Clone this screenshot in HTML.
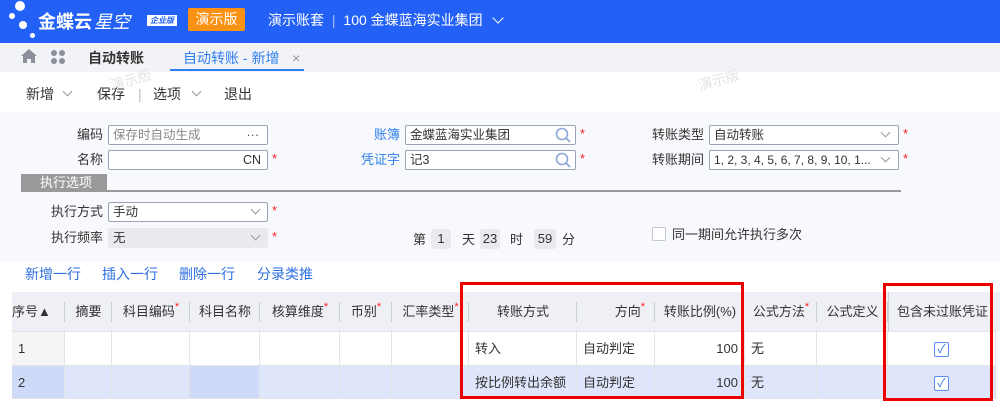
<!DOCTYPE html>
<html><head><meta charset="utf-8"><style>
*{margin:0;padding:0;box-sizing:border-box}
body{width:1000px;height:408px;overflow:hidden;font-family:"Liberation Sans","Noto Sans CJK SC",sans-serif;font-size:13px;line-height:20px;color:#333;background:#fff;position:relative}
.a{position:absolute;white-space:nowrap}
.hdr{left:0;top:0;width:1000px;height:43px;background:#2360f5}
.tabs{left:0;top:43px;width:1000px;height:29px;background:#f1f3f6}
.form{left:0;top:112px;width:1000px;height:150px;background:#f8f9fc}
.lbl{text-align:right;font-size:13px;color:#333}
.inp{background:#fff;border:1px solid #9aa3b5;border-radius:2px;height:20px;font-size:12.5px;line-height:18px;padding-left:4px;color:#333}
.star{color:#f22;font-size:13px}
.st{color:#f22;font-size:11px;position:relative;top:-6px;line-height:0}
.box{background:#e8eaee;border-radius:3px;height:20px;text-align:center;line-height:20px}
.col{position:absolute;top:292px;height:107px}
.hd{height:39px;background:#eef0f5;line-height:39px;font-size:13px;text-align:center;position:relative}
.r1{height:34px;background:#fff;border-top:1px solid #e2e4e8;border-right:1px solid #e2e4e8;line-height:33px;padding:0 6px}
.r2{height:34px;background:#dfe6fb;border-top:1px solid #e2e4e8;border-right:1px solid #e2e4e8;line-height:33px;padding:0 6px;border-bottom:1px solid #e2e4e8}
.sep{position:absolute;right:0;top:10px;width:1px;height:20px;background:#c8ccd4}
.chk{display:inline-block;width:15px;height:15px;border:1px solid #5b8ef0;border-radius:2px;background:#fff;color:#3a7af0;font-size:12px;line-height:13px;text-align:center;vertical-align:middle}
.chev{display:inline-block;width:7px;height:7px;border-right:1px solid #999;border-bottom:1px solid #999;transform:rotate(45deg)}
</style></head><body>
<div class="a hdr"></div>
<div class="a" style="left:15px;top:1px;width:10px;height:10px;border-radius:50%;background:#fff"></div>
<div class="a" style="left:9px;top:13px;width:6px;height:6px;border-radius:50%;background:#fff"></div>
<div class="a" style="left:19px;top:21px;width:8px;height:8px;border-radius:50%;background:#fff"></div>
<div class="a" style="left:30px;top:33px;width:5px;height:5px;border-radius:50%;background:#fff"></div>
<div class="a" style="left:38px;top:10px;color:#fff;font-size:18px;line-height:24px;font-weight:bold">金蝶云<span style="font-weight:normal;font-style:italic;margin-left:2px">星空</span></div>
<div class="a" style="left:147px;top:15px;width:30px;height:11px;background:#fff;color:#2360f5;font-size:8px;line-height:11px;text-align:center;font-style:italic;font-weight:bold">企业版</div>
<div class="a" style="left:188px;top:8px;width:57px;height:23px;background:#fb9214;border-radius:2px;color:#fff;font-size:14px;line-height:23px;text-align:center">演示版</div>
<div class="a" style="left:268px;top:10px;color:#fff;font-size:14px">演示账套 <span style="opacity:.6;margin:0 4px">|</span> 100 金蝶蓝海实业集团</div>
<div class="a" style="left:494px;top:14px;width:8px;height:8px;border-right:1.5px solid #fff;border-bottom:1.5px solid #fff;transform:rotate(45deg)"></div>

<div class="a tabs"></div>
<svg class="a" style="left:21px;top:49px" width="16" height="14" viewBox="0 0 16 14"><path d="M8 0L0 7h2v7h4v-4h4v4h4V7h2z" fill="#8a8f99"/></svg>
<svg class="a" style="left:50px;top:49px" width="16" height="16" viewBox="0 0 16 16" fill="#8a8f99"><circle cx="4" cy="4" r="3"/><circle cx="12" cy="4" r="3"/><circle cx="4" cy="12" r="3"/><circle cx="12" cy="12" r="3"/></svg>
<div class="a" style="left:88px;top:48px;font-size:14px;font-weight:bold;color:#333">自动转账</div>
<div class="a" style="left:183px;top:48px;font-size:14px;color:#2f7ff0">自动转账 - 新增</div>
<div class="a" style="left:292px;top:48px;font-size:14px;color:#999">×</div>
<div class="a" style="left:170px;top:69px;width:134px;height:2px;background:#2f7ff0"></div>

<div class="a" style="left:26px;top:84px;font-size:14px;color:#333">新增</div><div class="a chev" style="left:64px;top:88px"></div>
<div class="a" style="left:97px;top:84px;font-size:14px">保存</div>
<div class="a" style="left:138px;top:84px;font-size:14px;color:#bbb">|</div>
<div class="a" style="left:153px;top:84px;font-size:14px">选项</div><div class="a chev" style="left:193px;top:88px"></div>
<div class="a" style="left:224px;top:84px;font-size:14px">退出</div>
<div class="a" style="left:110px;top:70px;color:#e4e4e4;font-size:14px;transform:rotate(-15deg)">演示版</div>
<div class="a" style="left:698px;top:70px;color:#e4e4e4;font-size:14px;transform:rotate(-15deg)">演示版</div>

<div class="a form"></div>
<div class="a lbl" style="left:40px;top:125px;width:63px">编码</div>
<div class="a inp" style="left:108px;top:125px;width:160px;color:#888">保存时自动生成<span style="position:absolute;right:8px;color:#555">···</span></div>
<div class="a lbl" style="left:40px;top:150px;width:63px">名称</div>
<div class="a inp" style="left:108px;top:150px;width:160px"><span style="position:absolute;right:6px">CN</span></div>
<div class="a star" style="left:272px;top:149px">*</div>
<div class="a lbl" style="left:340px;top:125px;width:60px;color:#2f7ff0">账簿</div>
<div class="a inp" style="left:405px;top:125px;width:171px">金蝶蓝海实业集团</div>
<div class="a lbl" style="left:340px;top:150px;width:60px;color:#2f7ff0">凭证字</div>
<div class="a inp" style="left:405px;top:150px;width:171px">记3</div>
<svg class="a" style="left:555px;top:127px" width="16" height="16" viewBox="0 0 16 16"><circle cx="7" cy="7" r="5.5" fill="none" stroke="#8aa7d6" stroke-width="1.6"/><path d="M11 11l4 4" stroke="#8aa7d6" stroke-width="1.8"/></svg>
<svg class="a" style="left:555px;top:152px" width="16" height="16" viewBox="0 0 16 16"><circle cx="7" cy="7" r="5.5" fill="none" stroke="#8aa7d6" stroke-width="1.6"/><path d="M11 11l4 4" stroke="#8aa7d6" stroke-width="1.8"/></svg>
<div class="a star" style="left:580px;top:124px">*</div>
<div class="a star" style="left:580px;top:149px">*</div>
<div class="a lbl" style="left:640px;top:125px;width:64px">转账类型</div>
<div class="a inp" style="left:709px;top:125px;width:190px">自动转账</div><div class="a chev" style="left:882px;top:129px"></div>
<div class="a lbl" style="left:640px;top:150px;width:64px">转账期间</div>
<div class="a inp" style="left:709px;top:150px;width:190px;font-size:12px">1, 2, 3, 4, 5, 6, 7, 8, 9, 10, 1...</div><div class="a chev" style="left:882px;top:154px"></div>
<div class="a star" style="left:903px;top:124px">*</div>
<div class="a star" style="left:903px;top:149px">*</div>

<div class="a" style="left:21px;top:174px;width:86px;height:17px;background:#9a9a9a;color:#fff;font-size:13px;line-height:17px;padding-left:19px">执行选项</div>
<div class="a" style="left:21px;top:190px;width:880px;height:2px;background:#999"></div>

<div class="a lbl" style="left:40px;top:202px;width:63px">执行方式</div>
<div class="a inp" style="left:108px;top:202px;width:160px">手动</div><div class="a chev" style="left:252px;top:206px"></div>
<div class="a star" style="left:272px;top:201px">*</div>
<div class="a lbl" style="left:40px;top:228px;width:63px">执行频率</div>
<div class="a inp" style="left:108px;top:228px;width:160px;background:#e8eaee;border-color:#e8eaee">无</div><div class="a chev" style="left:252px;top:232px"></div>
<div class="a star" style="left:272px;top:227px">*</div>
<div class="a" style="left:413px;top:230px">第</div>
<div class="a box" style="left:431px;top:229px;width:20px">1</div>
<div class="a" style="left:462px;top:230px">天</div>
<div class="a box" style="left:480px;top:229px;width:20px">23</div>
<div class="a" style="left:510px;top:230px">时</div>
<div class="a box" style="left:534px;top:229px;width:22px">59</div>
<div class="a" style="left:562px;top:230px">分</div>
<div class="a" style="left:652px;top:227px;width:14px;height:14px;border:1px solid #c4c8d0;border-radius:2px;background:#fff"></div>
<div class="a" style="left:672px;top:225px">同一期间允许执行多次</div>

<div class="a" style="left:25px;top:264px;font-size:14px;color:#2f6fe0">新增一行</div>
<div class="a" style="left:102px;top:264px;font-size:14px;color:#2f6fe0">插入一行</div>
<div class="a" style="left:179px;top:264px;font-size:14px;color:#2f6fe0">删除一行</div>
<div class="a" style="left:257px;top:264px;font-size:14px;color:#2f6fe0">分录类推</div>

<div class="a" style="left:12px;top:292px;width:988px;height:39px;background:#eef0f5"></div>

<div class="col" style="left:12px;width:53px"><div class="hd" style="text-align:left">序号▲<div class="sep"></div></div><div class="r1" style="background:#f5f5f5">1</div><div class="r2" style="background:#cfdaf8">2</div></div>
<div class="col" style="left:65px;width:47px"><div class="hd">摘要<div class="sep"></div></div><div class="r1"></div><div class="r2"></div></div>
<div class="col" style="left:112px;width:78px"><div class="hd">科目编码<span class="st">*</span><div class="sep"></div></div><div class="r1"></div><div class="r2"></div></div>
<div class="col" style="left:190px;width:70px"><div class="hd">科目名称<div class="sep"></div></div><div class="r1"></div><div class="r2" style="background:#cfdaf8"></div></div>
<div class="col" style="left:260px;width:80px"><div class="hd">核算维度<span class="st">*</span><div class="sep"></div></div><div class="r1"></div><div class="r2"></div></div>
<div class="col" style="left:340px;width:52px"><div class="hd">币别<span class="st">*</span><div class="sep"></div></div><div class="r1"></div><div class="r2"></div></div>
<div class="col" style="left:392px;width:77px"><div class="hd">汇率类型<span class="st">*</span><div class="sep"></div></div><div class="r1"></div><div class="r2"></div></div>
<div class="col" style="left:469px;width:108px"><div class="hd">转账方式<div class="sep"></div></div><div class="r1">转入</div><div class="r2">按比例转出余额</div></div>
<div class="col" style="left:577px;width:78px"><div class="hd" style="text-align:right;padding-right:10px">方向<span class="st">*</span><div class="sep"></div></div><div class="r1">自动判定</div><div class="r2">自动判定</div></div>
<div class="col" style="left:655px;width:90px"><div class="hd">转账比例(%)</div><div class="r1" style="text-align:right">100</div><div class="r2" style="text-align:right">100</div></div>
<div class="col" style="left:745px;width:72px"><div class="hd">公式方法<span class="st">*</span><div class="sep"></div></div><div class="r1">无</div><div class="r2">无</div></div>
<div class="col" style="left:817px;width:71px"><div class="hd">公式定义<div class="sep"></div></div><div class="r1"></div><div class="r2"></div></div>
<div class="col" style="left:888px;width:108px"><div class="hd" style="border-left:1px solid #c8ccd4">包含未过账凭证</div><div class="r1" style="text-align:center"><span class="chk">✓</span></div><div class="r2" style="text-align:center"><span class="chk">✓</span></div></div>

<div class="a" style="left:460px;top:282px;width:284px;height:117px;border:3px solid #ee0000"></div>
<div class="a" style="left:883px;top:283px;width:110px;height:118px;border:3px solid #ee0000"></div>
</body></html>
